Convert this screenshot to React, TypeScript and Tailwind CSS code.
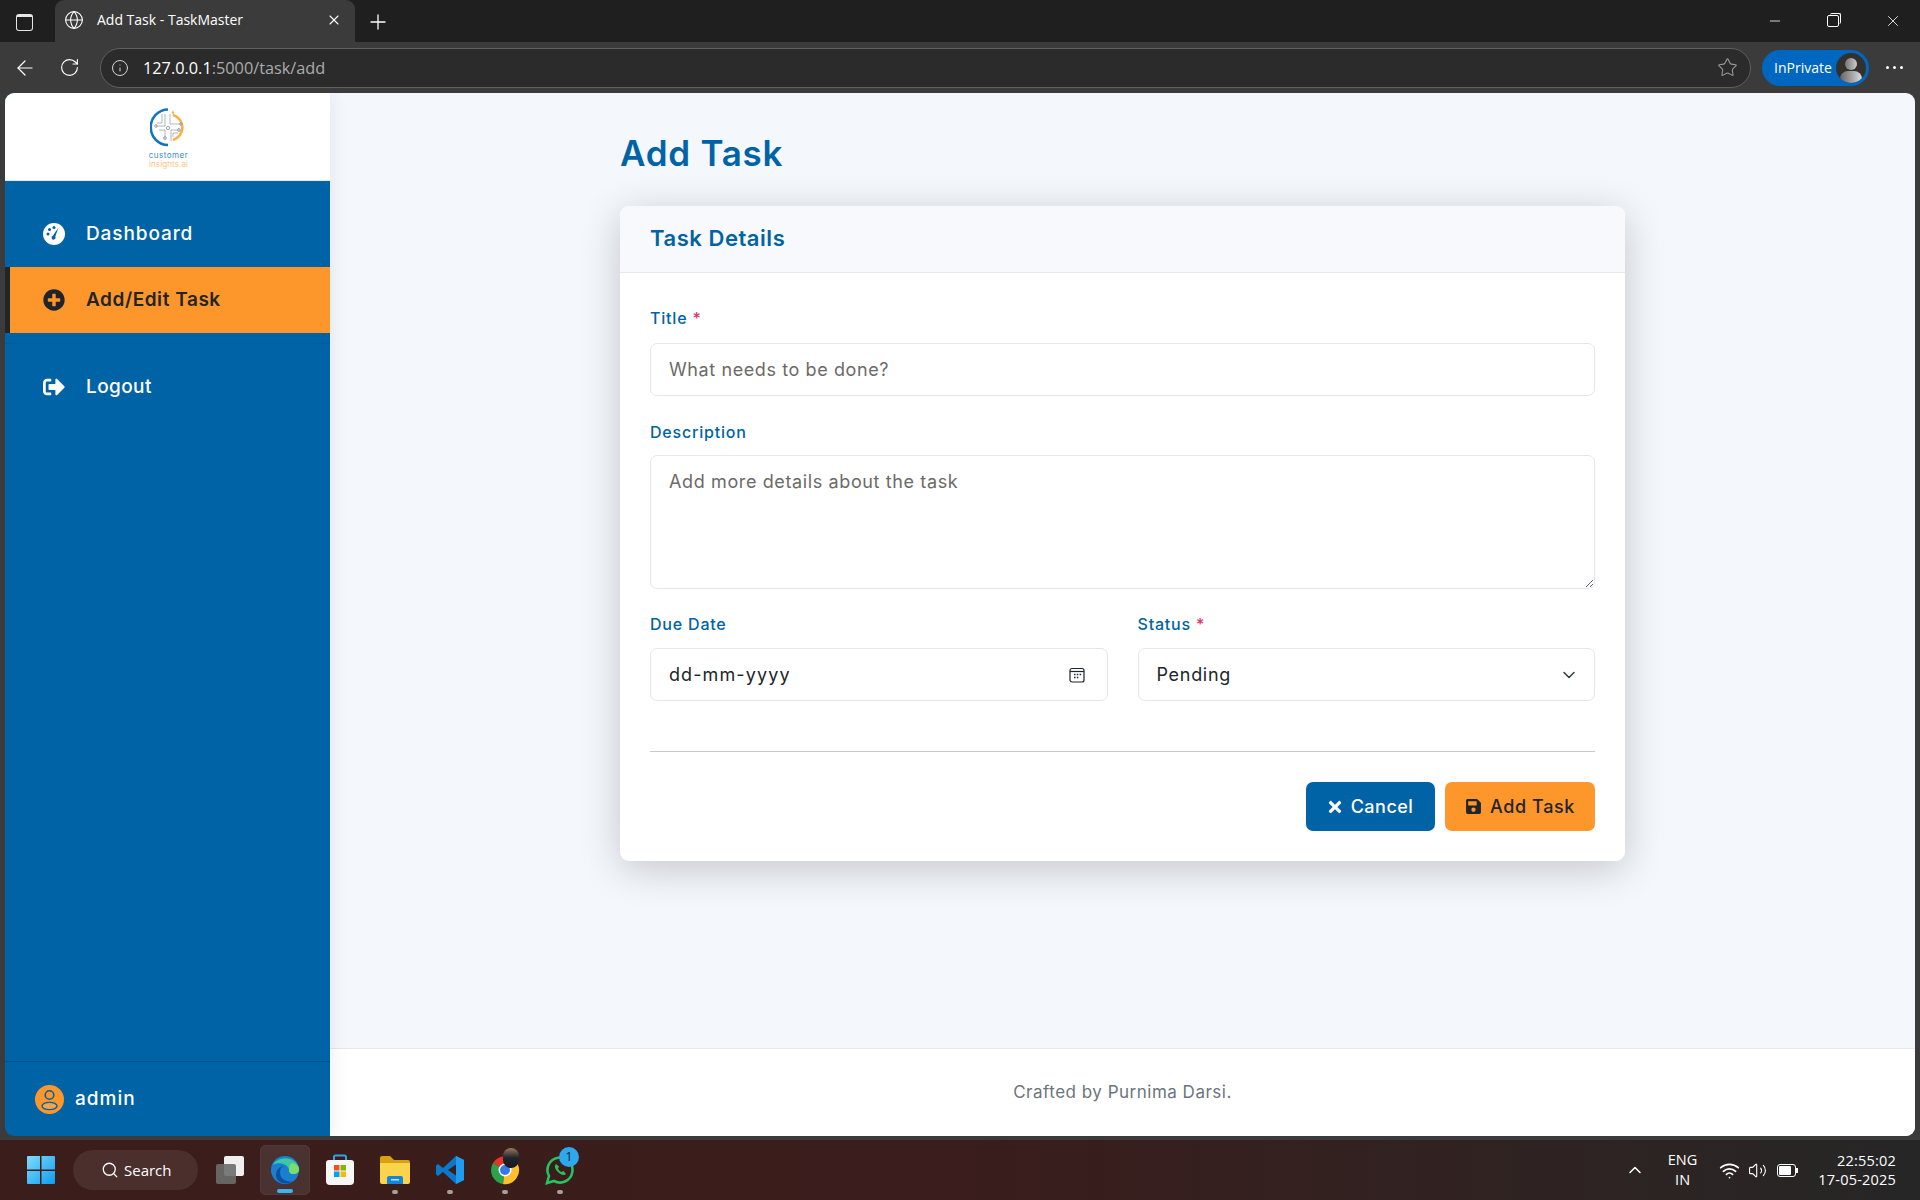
import React from 'react';
import { ArrowLeft, ChevronDown, ChevronUp, Globe, Info, Minus, Plus, RotateCw, Search, Star, Volume2, Wifi, X } from 'lucide-react';
import { FaPlusCircle, FaSave, FaSignOutAlt, FaTimes } from 'react-icons/fa';

const Logo = () => (
  <div className="ml-[2px] flex flex-col items-center">
    <svg width="37" height="39" viewBox="0 0 37 39" fill="none">
      <path d="M18 1.500A17 17.500 0 0 0 18 37" stroke="#0f75bc" strokeWidth="2.600" />
      <path d="M23 7A13 13 0 0 1 23 32" stroke="#fbb040" strokeWidth="2.600" />
      <circle cx="23" cy="4.500" r="1.300" fill="#fbb040" />
      <path d="M15 6v12H6M20 6v10M9 22h6v10M21 33V22h9M20 16h11M12 6v9H7M23 29v-4h5" stroke="#9ca3af" strokeWidth="0.800" />
      <circle cx="15" cy="30" r="1.400" stroke="#9ca3af" />
      <circle cx="29" cy="22" r="1.400" stroke="#9ca3af" />
      <circle cx="18" cy="20" r="1.600" stroke="#9ca3af" />
      <circle cx="6" cy="18" r="1.300" stroke="#9ca3af" />
      <circle cx="31" cy="16" r="1.300" stroke="#9ca3af" />
    </svg>
    <div className="mt-[4px] text-[8px] leading-[8px] tracking-[0.5px] text-[#3b8fcc]">customer</div>
    <div className="mt-[1px] text-[8px] leading-[8px] tracking-[0.1px] text-[#fbc580]">insights.ai</div>
  </div>
);

const Gauge = () => (
  <svg width="22" height="22" viewBox="0 0 22 22">
    <circle cx="11" cy="11" r="11" fill="#fff" />
    <circle cx="5" cy="11" r="1.500" fill="#0063a6" />
    <circle cx="6.500" cy="6.500" r="1.500" fill="#0063a6" />
    <circle cx="11" cy="4.500" r="1.500" fill="#0063a6" />
    <path d="M15.500 4.500 12.300 13.500a2 2 0 1 1-2.400-.8Z" fill="#0063a6" />
  </svg>
);

const UserBadge = () => (
  <svg width="29" height="29" viewBox="0 0 29 29" fill="none">
    <circle cx="14.500" cy="14.500" r="14.500" fill="#fd962b" />
    <circle cx="14.500" cy="10" r="4.300" stroke="#0063a6" strokeWidth="1.600" />
    <ellipse cx="14.500" cy="21" rx="7.500" ry="3.600" stroke="#0063a6" strokeWidth="1.400" fill="#f8a24a" />
  </svg>
);

const Field = ({ label, required, children }: { label: string; required?: boolean; children: React.ReactNode }) => (
  <div>
    <label className="mb-[17px] block h-[17px] translate-y-[1px] text-[16px] leading-[17px] font-medium tracking-[0.8px] text-[#0063a6]">
      {label}
      {required && <span className="text-[#dc3567]"> *</span>}
    </label>
    {children}
  </div>
);

const Windows = () => (
  <svg width="30" height="30" viewBox="0 0 30 30">
    <defs>
      <linearGradient id="win" x1="0" y1="0" x2="1" y2="1">
        <stop offset="0" stopColor="#7fdcfb" />
        <stop offset="1" stopColor="#0f9bf0" />
      </linearGradient>
    </defs>
    <path d="M2 1h12v13.500H1V2a1 1 0 0 1 1-1ZM15.500 1H28a1 1 0 0 1 1 1v12.500H15.500ZM1 16h13v13H2a1 1 0 0 1-1-1ZM15.500 16H29v12a1 1 0 0 1-1 1H15.500Z" fill="url(#win)" />
  </svg>
);

const Edge = () => (
  <svg width="30" height="30" viewBox="0 0 30 30">
    <circle cx="15" cy="15" r="14" fill="#1a7fd0" />
    <path d="M3 10C6 2 24-1 29 13c1 4-2 6-6 6-3 0-4-2-4-4 0-6-12-9-16-5Z" fill="#3fc6a6" />
    <path d="M22 8c5 1 7 4 7 6 0 4-3 5-6 5-3 0-4-2-4-4 0-3 1-6 3-7Z" fill="#7ddc6a" />
    <path d="M10 17c0 7 6 11 13 9-6 5-17 2-17-6 0-5 4-9 8-9-3 1-4 3-4 6Z" fill="#0c4f9e" />
  </svg>
);

const Store = () => (
  <svg width="28" height="32" viewBox="0 0 28 32">
    <path d="M8 7V3a1.500 1.500 0 0 1 1.500-1.500h9A1.500 1.500 0 0 1 20 3v4" fill="none" stroke="#2ba5e8" strokeWidth="2" />
    <path d="M3 6h22a3 3 0 0 1 3 3v18a4 4 0 0 1-4 4H4a4 4 0 0 1-4-4V9a3 3 0 0 1 3-3Z" fill="#f7f7f7" />
    <rect x="8" y="11" width="5.500" height="5.500" fill="#f25022" />
    <rect x="14.500" y="11" width="5.500" height="5.500" fill="#7fba00" />
    <rect x="8" y="17.500" width="5.500" height="5.500" fill="#00a4ef" />
    <rect x="14.500" y="17.500" width="5.500" height="5.500" fill="#ffb900" />
  </svg>
);

const Folder = () => (
  <svg width="30" height="28" viewBox="0 0 30 28">
    <path d="M0 2a2 2 0 0 1 2-2h8l4 4h14a2 2 0 0 1 2 2v6H0Z" fill="#d9a012" />
    <path d="M0 7h30v19a2 2 0 0 1-2 2H2a2 2 0 0 1-2-2Z" fill="#fcd34d" />
    <path d="M7 22a2 2 0 0 1 2-2h12a2 2 0 0 1 2 2v6H7Z" fill="#1585d8" />
    <rect x="11" y="23" width="8" height="1.500" fill="#bae3ff" />
  </svg>
);

const VSCode = () => (
  <svg width="30" height="30" viewBox="0 0 30 30">
    <path d="M21 1 29 5v20l-8 4-13-12-5 4-2-1.500V10.500L3 9l5 4Z" fill="#0b78c9" />
    <path d="M21 1 29 5v20l-8 4Z" fill="#1f9cf0" />
    <path d="M21 9.500 13 15l8 5.500Z" fill="#3a1e1c" />
  </svg>
);

const Chrome = () => (
  <div className="relative h-[30px] w-[30px]">
    <svg width="30" height="30" viewBox="0 0 30 30">
      <path d="M15 15 3 8a14 14 0 0 1 24 0Z" fill="#e5352b" />
      <path d="M15 15 3 8a14 14 0 0 0 10 21Z" fill="#2ca24d" />
      <path d="M15 15 27 8a14 14 0 0 1-14 21Z" fill="#fbc02d" />
      <circle cx="15" cy="15" r="6.500" fill="#fff" />
      <circle cx="15" cy="15" r="5" fill="#3b78e7" />
    </svg>
    <div className="absolute top-[-7px] left-[13px] h-[20px] w-[16px] rounded-full bg-gradient-to-b from-[#9a7b60] via-[#20242a] to-[#14181d]" />
  </div>
);

const WhatsApp = () => (
  <div className="relative h-[30px] w-[30px]">
    <svg width="30" height="30" viewBox="0 0 30 30" fill="none">
      <path d="M2 28l2-7A12.500 12.500 0 1 1 9 26Z" stroke="#25c45f" strokeWidth="2.600" />
      <path d="M11 9c-2 2-1 5 2 8s6 4 8 2l-2.500-3-2 1c-1.500-.5-3-2-3.500-3.500l1-2Z" fill="#25c45f" />
    </svg>
    <div className="absolute top-[-8px] left-[14px] flex h-[20px] w-[20px] items-center justify-center rounded-full bg-[#2ea8ec] text-[12px] text-[#10202c]">1</div>
  </div>
);

const TaskIcon = ({ children, dot, active }: { children: React.ReactNode; dot?: boolean; active?: boolean }) => (
  <div className={`relative ml-[5px] flex h-[50px] w-[50px] items-center justify-center rounded-[5px] ${active ? 'border border-[#52383a] bg-[#4a3230]' : ''}`}>
    {children}
    {dot && <span className="absolute bottom-[1px] h-[4px] w-[6px] rounded-full bg-[#a89e9c]" />}
    {active && <span className="absolute bottom-[1px] h-[4px] w-[16px] rounded-full bg-[#3cb4f4]" />}
  </div>
);

const App = () => (
  <div className="flex h-[1200px] w-[1920px] flex-col overflow-hidden bg-[#3b3b3b] font-['Inter','Liberation_Sans',sans-serif]">
    {/* Browser tab strip */}
    <div className="flex h-[42px] items-end bg-[#1f1f1f] font-['Open_Sans',sans-serif] text-white">
      <div className="flex h-[40px] w-[55px] items-center justify-center pr-[6px]">
        <div className="h-[17px] w-[17px] rounded-[3px] border-[1.5px] border-[#e6e6e6] border-t-[3px]" />
      </div>
      <div className="flex h-[42px] w-[300px] items-center rounded-t-[9px] bg-[#3b3b3b] pr-[13px] pb-[3px] pl-[9px]">
        <Globe size={20} strokeWidth={1.3} />
        <span className="ml-[13px] flex-1 text-[14px]">Add Task - TaskMaster</span>
        <X size={16} strokeWidth={1.6} />
      </div>
      <div className="flex h-[40px] w-[45px] items-center justify-center">
        <Plus size={24} strokeWidth={1.3} />
      </div>
      <div className="flex h-[42px] flex-1 items-center justify-end pr-[18px]">
        <Minus size={16} strokeWidth={1.2} className="mr-[44px]" />
        <div className="relative mr-[45px] h-[12px] w-[12px] rounded-[2px] border border-white after:absolute after:top-[-3px] after:left-[2px] after:h-[11px] after:w-[11px] after:rounded-[2px] after:border-t after:border-r after:border-white" />
        <X size={18} strokeWidth={1.1} />
      </div>
    </div>

    {/* Address bar */}
    <div className="flex h-[51px] items-center bg-[#3b3b3b] font-['Open_Sans',sans-serif] text-white">
      <div className="flex w-[100px] items-center pl-[13px]">
        <ArrowLeft size={24} strokeWidth={1.2} />
        <RotateCw size={21} strokeWidth={1.3} className="ml-[22px]" />
      </div>
      <div className="flex h-[40px] w-[1651px] items-center rounded-full border border-[#5f5f5f] bg-[#2b2b2b] pr-[12px] pl-[10px]">
        <Info size={18} strokeWidth={1.3} className="text-[#d8d8d8]" />
        <span className="ml-[14px] flex-1 pt-[1px] text-[16.300px]">
          127.0.0.1<span className="text-[#ababab]">:5000/task/add</span>
        </span>
        <Star size={21} strokeWidth={1.2} className="text-[#9a9a9a]" />
      </div>
      <div className="ml-[11px] flex h-[36px] w-[107px] items-center rounded-full bg-[#0067c0] pr-[3px] pl-[12px]">
        <span className="flex-1 text-[14px]">InPrivate</span>
        <div className="relative h-[30px] w-[30px] overflow-hidden rounded-full bg-[#33302e]">
          <div className="absolute top-[5px] left-[9px] h-[12px] w-[12px] rounded-full bg-gradient-to-r from-[#777] to-[#ccc]" />
          <div className="absolute top-[18px] left-[4px] h-[16px] w-[22px] rounded-full bg-gradient-to-r from-[#666] to-[#ddd]" />
        </div>
      </div>
      <div className="ml-[17px] flex gap-[4px]">
        <span className="h-[3px] w-[3px] rounded-full bg-white" />
        <span className="h-[3px] w-[3px] rounded-full bg-white" />
        <span className="h-[3px] w-[3px] rounded-full bg-white" />
      </div>
    </div>

    {/* Page */}
    <div className="mx-[5px] flex h-[1043px] overflow-hidden rounded-[9px]">
      <aside className="relative z-10 flex w-[325px] shrink-0 flex-col bg-[#0063a6] text-white shadow-[4px_0_15px_rgba(0,0,0,0.06)]">
        <div className="flex h-[88px] items-center justify-center border-b border-[#e6e8f0] bg-white pt-[2px]">
          <Logo />
        </div>
        <nav className="flex-1 pt-[22px]">
          <a className="mb-[2px] flex h-[62px] items-center pl-[38px] text-[19px] font-medium tracking-[0.9px]">
            <Gauge />
            <span className="ml-[21px]">Dashboard</span>
          </a>
          <a className="flex h-[66px] items-center border-l-[5px] border-[#212529] bg-[#fd962b] pl-[33px] text-[19px] font-semibold tracking-[0.55px] text-[#212529]">
            <FaPlusCircle size={22} />
            <span className="ml-[21px]">Add/Edit Task</span>
          </a>
          <div className="mt-[10px] border-t border-[#005c9b]" />
          <a className="mt-[12px] flex h-[62px] items-center pl-[38px] text-[19px] font-medium tracking-[0.4px]">
            <FaSignOutAlt size={22} />
            <span className="ml-[21px]">Logout</span>
          </a>
        </nav>
        <div className="flex h-[75px] items-center border-t border-[#00518a] pl-[30px]">
          <UserBadge />
          <span className="ml-[11px] text-[19px] font-medium tracking-[1px]">admin</span>
        </div>
      </aside>

      <main className="flex flex-1 flex-col bg-[#f4f7fc]">
        <div className="flex-1">
          <div className="mx-auto w-[1005px] pt-[30px]">
            <h1 className="h-[60px] text-[35px] leading-[60px] font-semibold tracking-[0.75px] text-[#0063a6]">Add Task</h1>
            <div className="mt-[23px] overflow-hidden rounded-[9px] bg-white shadow-[0_8px_40px_rgba(0,0,0,0.2)]">
              <div className="flex h-[67px] items-center border-b border-[#e6e8f0] bg-[#f8f9fd] pb-[1px] pl-[30px]">
                <h2 className="text-[22px] font-semibold tracking-[0.55px] text-[#0063a6]">Task Details</h2>
              </div>
              <form className="px-[30px] pt-[36px] pb-[30px]">
                <Field label="Title" required>
                  <input
                    placeholder="What needs to be done?"
                    className="h-[53px] w-full rounded-[7px] border border-[#e3e6f0] px-[18px] text-[18px] tracking-[0.6px] text-[#212529] outline-none placeholder:text-[#6c6a68]"
                  />
                </Field>
                <div className="mt-[27px]">
                  <Field label="Description">
                    <textarea
                      placeholder="Add more details about the task"
                      className="-mt-[2px] block h-[134px] w-full rounded-[7px] border border-[#e3e6f0] px-[18px] pt-[12px] pb-[14px] text-[18px] tracking-[0.62px] text-[#212529] outline-none placeholder:text-[#6c6a68]"
                    />
                  </Field>
                </div>
                <div className="mt-[26px] grid grid-cols-2 gap-[30px]">
                  <Field label="Due Date">
                    <div className="-mt-[1px] flex h-[53px] items-center justify-between rounded-[7px] border border-[#e3e6f0] pr-[22px] pl-[18px] text-[18px] text-[#212529]">
                      <span className="tracking-[1.1px]">dd-mm-yyyy</span>
                      <svg width="16" height="16" viewBox="0 0 16 16" fill="none" stroke="#212529" strokeWidth="1.200">
                        <rect x="1" y="1.500" width="14" height="13.500" rx="2" />
                        <path d="M1 4.500h14" />
                        <path d="M5 7.500h1.500M7.800 7.500h1.500M10.600 7.500h1.500M5 10.500h1.500M7.800 10.500h1.500" strokeWidth="1.500" />
                      </svg>
                    </div>
                  </Field>
                  <Field label="Status" required>
                    <div className="-mt-[1px] flex h-[53px] items-center justify-between rounded-[7px] border border-[#e3e6f0] pr-[15px] pl-[18px] text-[18px] text-[#212529]">
                      <span className="tracking-[0.7px]">Pending</span>
                      <ChevronDown size={20} strokeWidth={1.8} className="text-[#343a40]" />
                    </div>
                  </Field>
                </div>
                <div className="mt-[50px] flex justify-end gap-[10px] border-t border-[#c8c9cc] pt-[30px]">
                  <button type="button" className="flex h-[49px] w-[129px] items-center justify-center rounded-[7px] bg-[#0063a6] pr-[2px] text-[18px] font-medium tracking-[0.5px] text-white">
                    <FaTimes size={18} />
                    <span className="ml-[7px]">Cancel</span>
                  </button>
                  <button type="button" className="flex h-[49px] w-[150px] items-center justify-center rounded-[7px] bg-[#fd962b] text-[18px] font-medium tracking-[0.6px] text-[#212529]">
                    <FaSave size={17} />
                    <span className="ml-[8px]">Add Task</span>
                  </button>
                </div>
              </form>
            </div>
          </div>
        </div>
        <footer className="flex h-[88px] items-center justify-center border-t border-[#e6e8f0] bg-white text-[17px] tracking-[0.5px] text-[#6c757d]">
          Crafted by Purnima Darsi.
        </footer>
      </main>
    </div>

    {/* Windows taskbar */}
    <div className="mt-[4px] flex h-[60px] items-center bg-gradient-to-r from-[#3b1d1b] via-[#3a1d1c] to-[#262626] font-['Open_Sans',sans-serif] text-white">
      <div className="ml-[26px]">
        <Windows />
      </div>
      <div className="ml-[17px] flex h-[40px] w-[125px] items-center rounded-full bg-[#4a2f2d] pl-[28px] text-[15px]">
        <Search size={18} strokeWidth={1.7} />
        <span className="ml-[5px]">Search</span>
      </div>
      <div className="ml-[2px] flex items-center">
        <TaskIcon>
          <div className="relative h-[28px] w-[28px]">
            <div className="absolute right-0 top-0 h-[20px] w-[20px] rounded-[2px] bg-[#f0efef]" />
            <div className="absolute bottom-0 left-0 h-[20px] w-[20px] rounded-[2px] bg-[#6d6d6d]/90" />
          </div>
        </TaskIcon>
        <TaskIcon active>
          <Edge />
        </TaskIcon>
        <TaskIcon>
          <Store />
        </TaskIcon>
        <TaskIcon dot>
          <Folder />
        </TaskIcon>
        <TaskIcon dot>
          <VSCode />
        </TaskIcon>
        <TaskIcon dot>
          <Chrome />
        </TaskIcon>
        <TaskIcon dot>
          <WhatsApp />
        </TaskIcon>
      </div>
      <div className="ml-auto flex items-center pr-[24px]">
        <ChevronUp size={20} strokeWidth={1.8} />
        <div className="ml-[23px] text-center text-[14.500px] leading-[20px]">
          <div>ENG</div>
          <div>IN</div>
        </div>
        <Wifi size={21} strokeWidth={2} className="ml-[22px]" />
        <Volume2 size={19} strokeWidth={1.4} className="ml-[8px]" />
        <div className="relative ml-[10px] h-[13px] w-[19px] rounded-[3px] border border-white p-[1px] after:absolute after:top-[3px] after:right-[-3px] after:h-[5px] after:w-[2px] after:bg-white">
          <div className="h-full w-[80%] rounded-[1px] bg-white" />
        </div>
        <div className="ml-[22px] text-right text-[14.500px] leading-[19px] tracking-[0.2px]">
          <div>22:55:02</div>
          <div>17-05-2025</div>
        </div>
      </div>
    </div>
  </div>
);

export default App;
